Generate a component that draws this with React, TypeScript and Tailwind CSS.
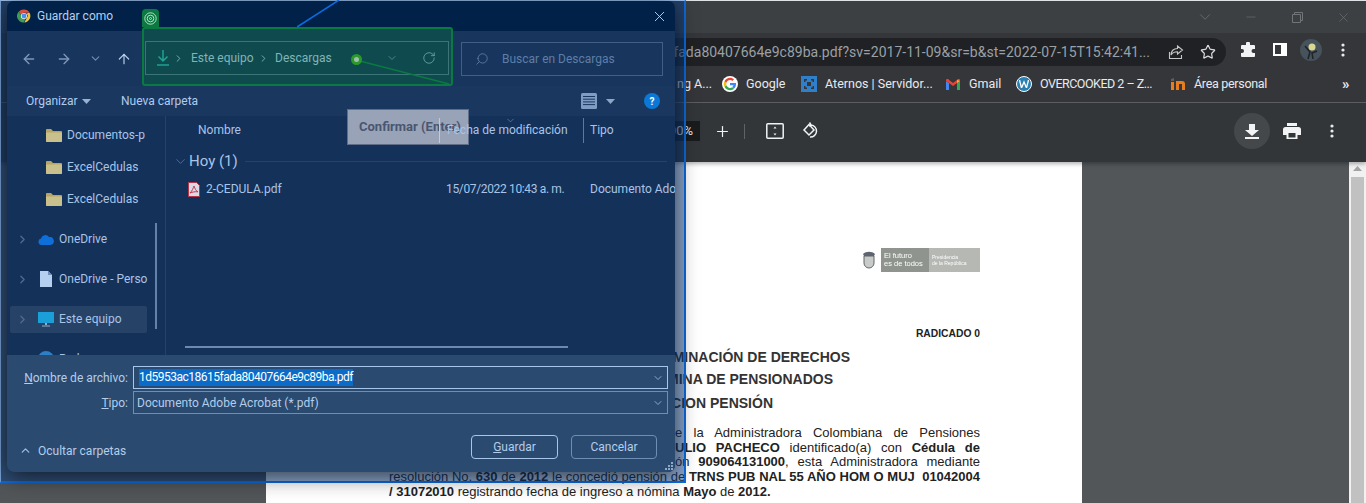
import React from "react";
import { ArrowLeft, ArrowRight, ArrowUp, ChevronDown, ChevronRight, ChevronUp, RotateCw, Search, X, Star, Plus, Minus } from "lucide-react";

const Chrome = ({ s = 14 }: { s?: number }) => (
  <svg width={s} height={s} viewBox="0 0 24 24" className="shrink-0">
    <path d="M12 1a11 11 0 0 1 9.500 5.500H12a5.500 5.500 0 0 0-5.200 3.600L3.200 4.400A11 11 0 0 1 12 1z" fill="#d9503f" />
    <path d="M21.500 6.500A11 11 0 0 1 12.500 23l4.300-7.800A5.500 5.500 0 0 0 16 7.500z" fill="#f2c230" />
    <path d="M3.200 4.400l5 8.500a5.500 5.500 0 0 0 6 4L12 23A11 11 0 0 1 3.200 4.400z" fill="#3f9b57" />
    <circle cx="12" cy="12" r="5.200" fill="#fff" />
    <circle cx="12" cy="12" r="4.200" fill="#4a8fe6" />
  </svg>
);

const Folder = () => (
  <svg width="16" height="14" viewBox="0 0 16 14" className="shrink-0">
    <path d="M0 2a1 1 0 0 1 1-1h4l2 2h8a1 1 0 0 1 1 1v9a1 1 0 0 1-1 1H1a1 1 0 0 1-1-1z" fill="#b5a665" />
    <path d="M0 4.500h16V13a1 1 0 0 1-1 1H1a1 1 0 0 1-1-1z" fill="#c9c08b" />
  </svg>
);

const SideFolder = ({ label }: { label: string }) => (
  <div className="h-8 flex items-center pl-[39px] gap-[5px]">
    <Folder />
    <span className="whitespace-nowrap">{label}</span>
  </div>
);

const SideRow = ({ icon, label, selected }: { icon: React.ReactNode; label: string; selected?: boolean }) => (
  <div className="h-10 flex items-center pl-[3px]">
    <div className={`w-[137px] h-[27px] rounded-[2px] flex items-center ${selected ? "bg-[#274267]" : ""}`}>
      <ChevronRight size={13} strokeWidth={2.5} className="ml-[6px] text-[#4f6a8e] shrink-0" />
      <div className="w-[16px] ml-[9px] flex justify-center shrink-0">{icon}</div>
      <span className="ml-[5px] whitespace-nowrap">{label}</span>
    </div>
  </div>
);

const Mark = ({ label, icon, className = "" }: { label: string; icon: React.ReactNode; className?: string }) => (
  <div className={`flex items-center gap-2 shrink-0 ${className}`}>
    {icon}
    <span className="whitespace-nowrap">{label}</span>
  </div>
);

const Dialog = () => (
  <div className="absolute left-[7px] top-[1px] w-[668px] h-[471px] rounded-[7px] overflow-hidden flex flex-col bg-[#14315a] shadow-[0_4px_22px_rgba(0,0,0,0.65)] text-[12px] text-[#a9c4e6] font-['Roboto',sans-serif]">
    <div className="h-[30px] bg-[#012148] flex items-center pl-[10px] shrink-0">
      <Chrome />
      <span className="ml-[6px] text-[#b5d0f0] whitespace-nowrap">Guardar como</span>
      <X size={17} strokeWidth={1.3} className="ml-auto mr-[7px] text-[#c3d6ee]" />
    </div>
    <div className="h-[55px] bg-[#17355d] flex items-center shrink-0">
      <ArrowLeft size={16} strokeWidth={2} className="ml-[14px] text-[#7f97b8]" />
      <ArrowRight size={16} strokeWidth={2} className="ml-[19px] text-[#7f97b8]" />
      <ChevronDown size={13} strokeWidth={2.4} className="ml-[17px] text-[#6f87aa]" />
      <ArrowUp size={16} strokeWidth={1.8} className="ml-[14px] text-[#b9cde8]" />
      <div className="ml-[14px] w-[304px] h-[34px] border border-[#3c5c82]" />
      <div className="ml-[11px] w-[202px] h-[34px] border border-[#3f5f86] flex items-center">
        <Search size={14} strokeWidth={1.5} className="ml-[13px] -scale-x-100 text-[#5f7ea6]" />
        <span className="ml-[13px] text-[#5f7ea6] whitespace-nowrap">Buscar en Descargas</span>
      </div>
    </div>
    <div className="h-[30px] bg-[#1a3760] flex items-center shrink-0 whitespace-nowrap">
      <span className="ml-[19px] w-[56px] text-[#b0cbec]">Organizar</span>
      <svg width="9" height="5" className="ml-0"><path d="M0 0h9L4.500 5z" fill="#9ab1cf" /></svg>
      <span className="ml-[30px] w-[460px] text-[#b0cbec]">Nueva carpeta</span>
      <svg width="16" height="16" viewBox="0 0 16 16">
        <rect width="16" height="16" rx="1.500" fill="#7f9cc3" />
        <path d="M2 3.500h12M2 6.200h12M2 8.900h12M2 11.600h12" stroke="#1a3760" strokeWidth="1" />
      </svg>
      <svg width="9" height="5" className="ml-[9px]"><path d="M0 0h9L4.500 5z" fill="#8ea6c6" /></svg>
      <div className="ml-[29px] w-4 h-4 rounded-full bg-[#0b78d8] text-white text-[10px] font-bold flex items-center justify-center">?</div>
    </div>
    <div className="h-[239px] flex shrink-0">
      <div className="w-[159px] shrink-0 border-r border-[#24436c] pt-[3px] overflow-hidden relative">
        <SideFolder label="Documentos-p" />
        <SideFolder label="ExcelCedulas" />
        <SideFolder label="ExcelCedulas" />
        <div className="h-1" />
        <SideRow
          label="OneDrive"
          icon={
            <svg width="16" height="11" viewBox="0 0 16 11">
              <path d="M3.500 11a3.300 3.300 0 0 1-.5-6.500A4.500 4.500 0 0 1 11 3a3.500 3.500 0 0 1 1.500 8z" fill="#0f6fd8" />
            </svg>
          }
        />
        <SideRow
          label="OneDrive - Perso"
          icon={
            <svg width="12" height="16" viewBox="0 0 12 16">
              <path d="M0 0h8l4 4v12H0z" fill="#b5cff0" />
              <path d="M8 0v4h4z" fill="#6f8db5" />
            </svg>
          }
        />
        <SideRow
          selected
          label="Este equipo"
          icon={
            <svg width="16" height="15" viewBox="0 0 16 15">
              <rect width="16" height="11" fill="#1a9fd8" />
              <path d="M7 11h2v2H7z" fill="#8fb0d0" />
              <path d="M4 13.500h8v1H4z" fill="#8fb0d0" />
            </svg>
          }
        />
        <div className="h-10 flex items-center pl-[31px]">
          <div className="w-4 h-4 rounded-full bg-[#2f7fc4]" />
          <span className="ml-[5px]">Red</span>
        </div>
        <div className="absolute left-[148px] top-[107px] w-[2px] h-[106px] bg-[#6482a8]" />
      </div>
      <div className="flex-1 min-w-0 flex flex-col relative">
        <div className="absolute left-[181px] -top-[7px] w-[122px] h-[36px] bg-[#98a3b7] border border-[#5f6e88] flex items-center pl-[11px] text-[13px] font-bold text-[#4a566f] whitespace-nowrap">Confirmar (Enter)</div>
        <div className="h-[28px] flex items-center shrink-0 relative whitespace-nowrap z-10">
          <div className="w-[273px] pl-[32px]">Nombre</div>
          <div className="w-[144px] h-[25px] border-l border-[#c3cad6] pl-[7px] flex items-center">Fecha de modificación</div>
          <div className="h-[25px] border-l border-[#587aa3] pl-[6px] flex items-center">Tipo</div>
          <ChevronDown size={11} strokeWidth={1.3} className="absolute left-[339px] -top-[1px] text-[#7f97b8]" />
        </div>
        <div className="h-[28px] mt-[3px] flex items-center shrink-0 whitespace-nowrap">
          <ChevronDown size={15} strokeWidth={1.2} className="ml-[7px] text-[#5f7ea6]" />
          <span className="ml-[1px] w-[56px] text-[15px] text-[#a9c4e6]">Hoy (1)</span>
          <div className="flex-1 h-px bg-[#24436c] mr-[8px]" />
        </div>
        <div className="h-[28px] flex items-center shrink-0 whitespace-nowrap">
          <svg width="12" height="15" viewBox="0 0 12 15" className="ml-[22px] shrink-0">
            <path d="M.5.500h8l3 3v11H.5z" fill="#d9dbe6" stroke="#b8364a" />
            <path d="M6 4c-.8 2-1.800 5-4 7 2.500-1 5-1.500 8-1.200C8 9 6.800 6.500 6 4z" fill="none" stroke="#c43a50" />
          </svg>
          <span className="ml-[6px] w-[240px] shrink-0">2-CEDULA.pdf</span>
          <span className="w-[144px] shrink-0 tracking-[-0.35px]">15/07/2022 10:43 a. m.</span>
          <span className="shrink-0">Documento Adobe Acrobat</span>
        </div>
        <div className="mt-auto mb-[7px] ml-[19px] w-[383px] h-[2px] bg-[#6c8ab0] shrink-0" />
      </div>
    </div>
    <div className="flex-1 bg-[#2a4a6f] relative text-[#b4cdea] flex flex-col">
      <div className="flex items-center h-[23px] mt-[11px]">
        <span className="w-[121px] text-right whitespace-nowrap"><span className="underline">N</span>ombre de archivo:</span>
        <div className="ml-[5px] w-[535px] h-[23px] border border-[#a8c6ea] flex items-center pl-[5px]">
          <span className="bg-[#0a6cc8] text-white leading-[17px] whitespace-nowrap tracking-[-0.5px]">1d5953ac18615fada80407664e9c89ba.pdf</span>
          <ChevronDown size={12} className="ml-auto mr-[3px] text-[#8fa8c8]" />
        </div>
      </div>
      <div className="flex items-center h-[23px] mt-[2px]">
        <span className="w-[121px] text-right"><span className="underline">T</span>ipo:</span>
        <div className="ml-[5px] w-[535px] h-[23px] border border-[#6f8eb4] flex items-center pl-[3px]">
          <span className="whitespace-nowrap">Documento Adobe Acrobat (*.pdf)</span>
          <ChevronDown size={12} className="ml-auto mr-[3px] text-[#8fa8c8]" />
        </div>
      </div>
      <div className="flex items-center mt-[21px] h-[24px]">
        <div className="w-[464px] flex items-center pt-[7px] shrink-0">
          <ChevronUp size={13} strokeWidth={2.4} className="ml-[12px] text-[#a3bcdb]" />
          <span className="ml-[6px]">Ocultar carpetas</span>
        </div>
        <div className="w-[87px] h-[24px] rounded-[4px] border border-[#a8c6ea] flex items-center justify-center"><span><span className="underline">G</span>uardar</span></div>
        <div className="ml-[13px] w-[86px] h-[24px] rounded-[4px] border border-[#6f8eb4] flex items-center justify-center">Cancelar</div>
      </div>
      <svg width="10" height="10" className="absolute right-[1px] bottom-[1px]">
        <path d="M7 1h2v2H7zM4 4h2v2H4zM7 4h2v2H7zM1 7h2v2H1zM4 7h2v2H4zM7 7h2v2H7z" fill="#8fa8c8" />
      </svg>
    </div>
  </div>
);

export default function App() {
  return (
    <div className="relative w-[1366px] h-[503px] overflow-hidden bg-[#525659] font-['Roboto',sans-serif] text-[#e8eaed]">
      <div className="h-[33px] bg-[#3c4043] border-t border-[#dfe3e8] flex justify-end text-[#70757a]">
        <div className="w-[46px] flex items-center justify-center"><ChevronDown size={18} strokeWidth={1} /></div>
        <div className="w-[46px] flex items-center justify-center"><Minus size={14} strokeWidth={1} /></div>
        <div className="w-[46px] flex items-center justify-center">
          <svg width="11" height="11" viewBox="0 0 11 11" fill="none" stroke="currentColor"><path d="M.5 2.500h8v8h-8zM2.500 2.500v-2h8v8h-2" /></svg>
        </div>
        <div className="w-[46px] flex items-center justify-center"><X size={15} strokeWidth={1} /></div>
      </div>
      <div className="h-[33px] bg-[#35363a] flex items-end">
        <div className="ml-[600px] w-[626px] h-[28px] rounded-r-full bg-[#202124] flex items-center justify-end">
          <span className="text-[14px] text-[#9aa0a6] whitespace-nowrap shrink-0">fada80407664e9c89ba.pdf?sv=2017-11-09&amp;sr=b&amp;st=2022-07-15T15:42:41...</span>
          <svg width="16" height="16" viewBox="0 0 16 16" fill="none" stroke="#c4c7c5" strokeWidth="1.100" className="ml-[18px] mr-[16px] shrink-0">
            <path d="M1.500 8v6.500h12V11M9.500 2l5 4-5 4V7.700C6 7.700 4 9 3 11c0-4 2.500-6.500 6.500-6.500z" />
          </svg>
          <Star size={16} strokeWidth={1.8} className="mr-[10px] text-[#dadce0] shrink-0" />
        </div>
        <div className="flex items-center h-[33px] text-[#f1f3f4]">
          <svg width="16" height="16" viewBox="0 0 16 16" className="ml-[14px]" fill="#f1f3f4">
            <path d="M6 1.500a2 2 0 0 1 4 0V3h4a1 1 0 0 1 1 1v3h-1.500a2 2 0 0 0 0 4H15v3a1 1 0 0 1-1 1H2a1 1 0 0 1-1-1v-3h1a2 2 0 0 0 0-4H1V4a1 1 0 0 1 1-1h4z" />
          </svg>
          <div className="ml-[17px] w-[14px] h-[13px] bg-white flex"><div className="ml-[2px] mt-[2px] w-[6px] h-[9px] bg-[#35363a]" /></div>
          <svg width="22" height="22" viewBox="0 0 22 22" className="ml-[13px]">
            <circle cx="11" cy="11" r="11" fill="#46525c" />
            <circle cx="12" cy="8" r="3.500" fill="#d8d890" />
            <path d="M5 7l5 6-2 7M17 12l-5 2 1 6" stroke="#1f2327" strokeWidth="1.500" fill="none" />
          </svg>
          <svg width="4" height="14" viewBox="0 0 4 14" className="ml-[19px]" fill="#e8eaed">
            <circle cx="2" cy="2" r="1.600" /><circle cx="2" cy="7" r="1.600" /><circle cx="2" cy="12" r="1.600" />
          </svg>
        </div>
      </div>
      <div className="h-[37px] bg-[#35363a] border-b border-[#5f6164] flex items-center text-[12.500px] text-[#e8eaed] pl-[677px]">
        <span className="w-[45px] whitespace-nowrap shrink-0">ng A...</span>
        <Mark
          className="w-[79px]"
          label="Google"
          icon={
            <svg width="16" height="16" viewBox="0 0 48 48">
              <circle cx="24" cy="24" r="24" fill="#fff" />
              <path d="M42 24.500c0-1.300-.1-2.300-.3-3.500H24v6.800h10.200c-.4 2.200-1.700 4.200-3.700 5.500l5.800 4.500C39.800 34.500 42 29.900 42 24.500z" fill="#4285f4" />
              <path d="M24 43c5 0 9.200-1.600 12.300-4.500l-5.800-4.500c-1.700 1.100-3.800 1.800-6.500 1.800-4.900 0-9.100-3.300-10.600-7.800l-6 4.600C10.600 39 16.800 43 24 43z" fill="#34a853" />
              <path d="M13.400 28c-.4-1.200-.6-2.600-.6-4s.2-2.800.6-4l-6-4.600C6 18.100 5 21 5 24s1 5.900 2.400 8.600z" fill="#fbbc05" />
              <path d="M24 12.200c2.800 0 5.100 1 6.900 2.700l5.200-5.100C33.100 7 29 5 24 5 16.800 5 10.600 9 7.400 15.400l6 4.600c1.500-4.500 5.700-7.800 10.600-7.800z" fill="#ea4335" />
            </svg>
          }
        />
        <Mark
          className="w-[145px]"
          label="Aternos | Servidor..."
          icon={
            <svg width="16" height="16" viewBox="0 0 16 16">
              <rect width="16" height="16" fill="#2f80c8" />
              <path d="M3 3h3v1.500H4.500V6H3zM10 3h3v3h-1.500V4.500H10zM3 10h1.500v1.500H6V13H3zM13 10v3h-3v-1.500h1.500V10z" fill="#35363a" />
              <rect x="6" y="6" width="4" height="4" fill="#35363a" />
            </svg>
          }
        />
        <Mark
          className="w-[70px] gap-[9px]"
          label="Gmail"
          icon={
            <svg width="14" height="11" viewBox="0 0 14 11">
              <path d="M0 2v9h3V4z" fill="#4285f4" />
              <path d="M14 2v9h-3V4z" fill="#34a853" />
              <path d="M0 2a1.500 1.500 0 0 1 3-1l4 3 4-3a1.500 1.500 0 0 1 3 1l-3 2-4 3-4-3-3-2z" fill="#ea4335" />
              <path d="M11 1l3 1-3 2z" fill="#fbbc05" />
            </svg>
          }
        />
        <Mark
          className="w-[154px] tracking-[-0.5px]"
          label="OVERCOOKED 2 – Z..."
          icon={
            <div className="w-4 h-4 rounded-full bg-[#2b7fb0] border border-white flex items-center justify-center">
              <svg width="10" height="8" viewBox="0 0 10 8" fill="none" stroke="#fff" strokeWidth="1.300"><path d="M.5 0l2 8 2.500-6 2.500 6 2-8" /></svg>
            </div>
          }
        />
        <Mark
          className="w-[172px] tracking-[-0.3px]"
          label="Área personal"
          icon={
            <svg width="16" height="12" viewBox="0 0 16 12">
              <path d="M1 1l3-1v3H1z" fill="#5f5f5f" />
              <path d="M1 4h3v8H1z" fill="#e87d1e" />
              <path d="M6 12V3h6a3 3 0 0 1 3 3v6h-3V6H9v6z" fill="#e87d1e" />
            </svg>
          }
        />
        <span className="text-[15px] font-bold leading-none text-[#e8eaed]">»</span>
      </div>
      <div className="h-[59px] bg-[#323639] flex items-center pb-[3px] shadow-[0_2px_4px_rgba(0,0,0,0.3)] relative">
        <div className="ml-[600px] w-[100px] h-[20px] bg-[#191b1c] text-[13px] flex items-center justify-end pr-[7px]">100%</div>
        <Plus size={17} strokeWidth={1.7} className="ml-[14px] text-[#f1f3f4]" />
        <div className="ml-[13px] w-px h-[15px] bg-[#5f6368]" />
        <svg width="18" height="16" viewBox="0 0 18 16" fill="none" stroke="#f1f3f4" strokeWidth="1.500" className="ml-[21px]">
          <rect x=".8" y=".8" width="16.400" height="14.400" rx="1" />
          <path d="M9 3.500l-1.500 2h3zM9 12.500l-1.500-2h3z" fill="#f1f3f4" stroke="none" />
        </svg>
        <svg width="18" height="18" viewBox="0 0 18 18" fill="none" stroke="#f1f3f4" strokeWidth="1.500" className="ml-[18px]">
          <path d="M7 2.500l-5 5.500 5 5 5-5z" />
          <path d="M9 3a6 6 0 1 1-1 12M9 3l-1.500-2.500M9 3l-2 1.200" />
        </svg>
        <div className="ml-[414px] w-9 h-9 rounded-full bg-[#45484b] flex items-center justify-center">
          <svg width="14" height="15" viewBox="0 0 14 15" fill="#f1f3f4"><path d="M4 0h6v6h4l-7 6-7-6h4zM0 13h14v2H0z" /></svg>
        </div>
        <svg width="18" height="16" viewBox="0 0 18 16" className="ml-[13px]" fill="#f1f3f4">
          <path d="M4 0h10v3H4zM2.500 4h13A2.500 2.500 0 0 1 18 6.500V12h-3.500v4h-11v-4H0V6.500A2.500 2.500 0 0 1 2.500 4z" />
          <path d="M5.500 10h7v4.500h-7z" fill="#323639" />
        </svg>
        <svg width="4" height="14" viewBox="0 0 4 14" className="ml-[29px]" fill="#e8eaed">
          <circle cx="2" cy="2" r="1.600" /><circle cx="2" cy="7" r="1.600" /><circle cx="2" cy="12" r="1.600" />
        </svg>
      </div>
      <div className="h-[341px] flex">
        <div className="ml-[266px] w-[816px] h-full bg-white text-black font-['Liberation_Sans',sans-serif] pt-[86px] pr-[102px] pl-[123px]">
          <div className="h-6 flex justify-end items-center blur-[0.5px]">
            <svg width="18" height="20" viewBox="0 0 18 20" className="mr-[3px]">
              <path d="M3 4c3-3 9-3 12 0l-1 2H4z" fill="#5f6570" />
              <path d="M4 6h10v7a5 5 0 0 1-10 0z" fill="#c8cbc8" stroke="#5f6468" />
            </svg>
            <div className="w-[48px] h-6 bg-[#8f948e] text-[7.500px] leading-[8px] text-white pl-[3px] flex flex-col justify-center"><span>El futuro</span><span>es de todos</span></div>
            <div className="w-[51px] h-6 bg-[#b5b8b3] text-[5px] leading-[6px] text-white pl-[3px] flex flex-col justify-center"><span>Presidencia</span><span>de la República</span></div>
          </div>
          <div className="mt-[55px] h-[14px] text-right text-[10.300px] font-bold leading-[14px] text-[#222]">RADICADO 0</div>
          <div className="mt-[6px] h-5 pr-[130px] text-right text-[14px] font-bold leading-5 text-[#333] whitespace-nowrap">DETERMINACIÓN DE DERECHOS</div>
          <div className="mt-[2px] h-5 pr-[147px] text-right text-[14px] font-bold leading-5 text-[#333] whitespace-nowrap">NÓMINA DE PENSIONADOS</div>
          <div className="mt-1 h-5 pr-[207px] text-right text-[14px] font-bold leading-5 text-[#333] whitespace-nowrap">ASIGNACION PENSIÓN</div>
          <div className="mt-[13px] text-[13px] leading-[14.700px] text-[#222]">
            <div className="ml-[286px] [text-align-last:justify]">e la Administradora Colombiana de Pensiones</div>
            <div className="ml-[286px] [text-align-last:justify]"><b>ULIO PACHECO</b> identificado(a) con <b>Cédula de</b></div>
            <div className="ml-[286px] [text-align-last:justify]">ón <b>909064131000</b>, esta Administradora mediante</div>
            <div className="[text-align-last:justify] whitespace-nowrap">resolución No. <b>630</b> de <b>2012</b> le concedió pensión de <b>TRNS PUB NAL 55 AÑO HOM O MUJ &nbsp;01042004</b></div>
            <div><b>/ 31072010</b> registrando fecha de ingreso a nómina <b>Mayo</b> de <b>2012.</b></div>
          </div>
        </div>
        <div className="ml-auto w-[17px] h-full bg-[#f1f1f1] flex flex-col items-center">
          <svg width="9" height="5" className="mt-[4px]"><path d="M4.500 0L9 5H0z" fill="#a3a3a3" /></svg>
          <div className="mt-[6px] w-[13px] flex-1 bg-[#c1c1c1]" />
        </div>
      </div>

      <div className="absolute left-0 top-0 w-[686px] h-[483px] bg-[rgba(10,66,146,0.48)] border-t border-l border-r-2 border-b-2 border-t-[#9cc0ec] border-l-[#7ba4d8] border-r-[#0b6bde] border-b-[#0b6bde]" />
      <Dialog />
      <svg className="absolute left-[297px] top-0" width="44" height="28"><path d="M0 27L42 0" stroke="#0b6bde" strokeWidth="1.500" /></svg>

      <div className="absolute left-[142px] top-[9px] w-[17px] h-[18px] rounded-t-[4px] bg-[#0b7a42] flex items-center justify-center">
        <svg width="13" height="13" viewBox="0 0 13 13" fill="none" stroke="#b5e0c8"><circle cx="6.500" cy="6.500" r="5.700" /><circle cx="6.500" cy="6.500" r="3.300" /><circle cx="6.500" cy="6.500" r="1" /></svg>
      </div>
      <div className="absolute left-[142px] top-[27px] w-[311px] h-[59px] rounded-[3px] border-2 border-[#0b7a42] bg-[#0f4a4e] font-['Roboto',sans-serif] text-[12px] text-[#7fb5b8]">
        <div className="absolute left-[1px] top-[12px] w-[304px] h-[34px] border border-[#3d7478] flex items-center whitespace-nowrap">
          <svg width="12" height="16" viewBox="0 0 12 16" fill="none" stroke="#1ea394" strokeWidth="1.500" className="ml-[11px] shrink-0">
            <path d="M6 0v11M1.500 6.500L6 11l4.500-4.500M0 15h12" />
          </svg>
          <ChevronRight size={11} strokeWidth={2} className="ml-[4px] shrink-0 text-[#7fb5b8]" />
          <span className="ml-[7px] w-[66px] shrink-0">Este equipo</span>
          <ChevronRight size={11} strokeWidth={2} className="ml-[1px] shrink-0 text-[#7fb5b8]" />
          <span className="ml-[6px] w-[111px] shrink-0">Descargas</span>
          <ChevronDown size={12} strokeWidth={1.100} className="shrink-0 text-[#7fb5b8]" />
          <RotateCw size={14} strokeWidth={1.200} className="ml-[24px] shrink-0 text-[#7fb5b8]" />
        </div>
        <svg className="absolute left-[202px] top-[22px]" width="105" height="36">
          <path d="M10 9L103 33" stroke="#0b7a42" strokeWidth="1.500" />
        </svg>
        <div className="absolute left-[207px] top-[25px] w-[11px] h-[11px] rounded-full bg-[#9fc0b0] border-[3px] border-[#2b9a2b]" />
      </div>
    </div>
  );
}
